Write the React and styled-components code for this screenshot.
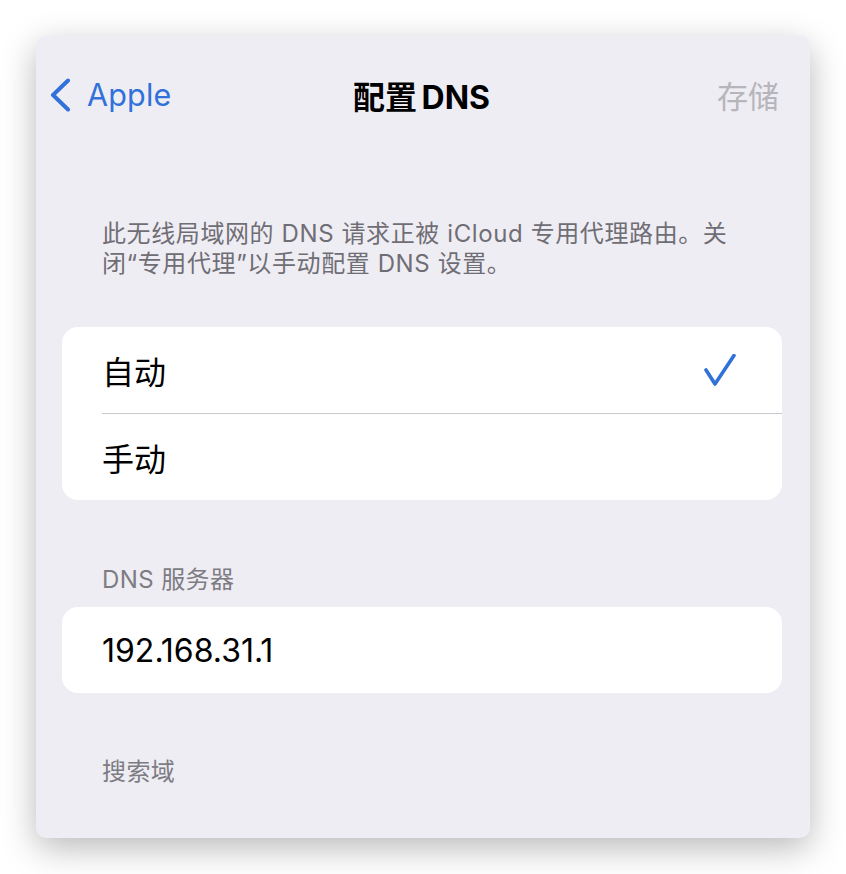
import React from 'react'
import styled, { createGlobalStyle } from 'styled-components'

const GlobalStyle = createGlobalStyle`
  html, body {
    margin: 0;
    padding: 0;
    background: #ffffff;
  }
  body {
    font-family: Inter, "Noto Sans CJK SC", sans-serif;
  }
`

const blue = '#3171d9'

function Chevron() {
  return (
    <svg width="24" height="34" viewBox="0 0 24 34" fill="none">
      <path d="M20 2.5 L5 17 L20 31.5" stroke={blue} strokeWidth="4" strokeLinecap="round" strokeLinejoin="round" />
    </svg>
  )
}

function Check() {
  return (
    <svg width="32" height="32" viewBox="0 0 32 32" fill="none">
      <path d="M2 16 L11 30 L30 1.5" stroke={blue} strokeWidth="3.6" strokeLinecap="round" strokeLinejoin="round" />
    </svg>
  )
}

function App() {
  const modes = [
    { id: 'auto', name: '自动', checked: true },
    { id: 'manual', name: '手动', checked: false },
  ]

  return (
    <>
      <GlobalStyle />
      <Page>
        <Sheet>
          <NavBar>
            <BackButton>
              <Chevron />
              <span>Apple</span>
            </BackButton>
            <Title>配置 DNS</Title>
            <SaveButton>存储</SaveButton>
          </NavBar>

          <Note>
            此无线局域网的 DNS 请求正被 iCloud 专用代理路由。关<br />
            闭“专用代理”以手动配置 DNS 设置。
          </Note>

          <Group $top={48}>
            {modes.map((item, i) => (
              <Row key={item.id} $divider={i > 0}>
                <RowLabel>{item.name}</RowLabel>
                {item.checked && <Check />}
              </Row>
            ))}
          </Group>

          <SectionHeader $top={65}>DNS 服务器</SectionHeader>
          <Group $top={12}>
            <Row>
              <RowLabel>192.168.31.1</RowLabel>
            </Row>
          </Group>

          <SectionHeader $top={64}>搜索域</SectionHeader>
        </Sheet>
      </Page>
    </>
  )
}

export default App

const Page = styled.div`
  width: 846px;
  height: 874px;
  padding: 36px 0 0 36px;
  box-sizing: border-box;
`

const Sheet = styled.div`
  width: 774px;
  height: 802px;
  background: #efedf4;
  border-radius: 10px;
  box-shadow: 0 10px 34px rgba(0, 0, 0, 0.28);
  overflow: hidden;
  display: flex;
  flex-direction: column;
`

const NavBar = styled.div`
  height: 117px;
  display: grid;
  grid-template-columns: 1fr auto 1fr;
  align-items: center;
  padding: 0 31px 0 12px;
`

const BackButton = styled.div`
  display: flex;
  align-items: center;
  gap: 15px;
  color: ${blue};
  font-size: 30.5px;
  letter-spacing: 0.2px;
  justify-self: start;
`

const Title = styled.div`
  font-size: 32px;
  font-weight: 700;
  color: #000;
  margin-left: 16px;
  word-spacing: -3px;
`

const SaveButton = styled.div`
  justify-self: end;
  font-size: 31px;
  color: #b6b5ba;
`

const Note = styled.div`
  margin: 66px 0 0 66px;
  font-size: 24px;
  letter-spacing: 0.6px;
  line-height: 30px;
  color: #6f6e74;
`

const Group = styled.div`
  margin: ${(p) => p.$top}px 28px 0 26px;
  background: #ffffff;
  border-radius: 16px;
  overflow: hidden;
`

const Row = styled.div`
  height: 86px;
  margin-left: 40px;
  padding-right: 46px;
  display: flex;
  align-items: center;
  justify-content: space-between;
  border-top: ${(p) => (p.$divider ? '1px solid #c9c8cd' : 'none')};
`

const RowLabel = styled.div`
  font-size: 32px;
  color: #000;
`

const SectionHeader = styled.div`
  margin: ${(p) => p.$top}px 0 0 66px;
  font-size: 24px;
  letter-spacing: 0.4px;
  line-height: 30px;
  color: #7d7c82;
`
